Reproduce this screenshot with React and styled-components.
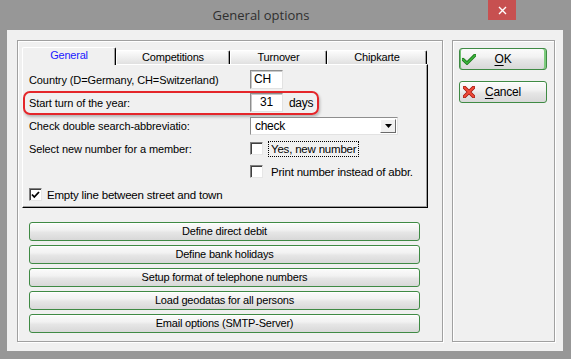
import React from 'react';
import styled, { createGlobalStyle } from 'styled-components';

const Global = createGlobalStyle`
  html, body { margin: 0; padding: 0; background: #979797; }
  body {
    width: 571px; height: 359px; overflow: hidden;
    font-family: "Liberation Sans", Arial, sans-serif;
  }
  * { box-sizing: border-box; }
`;

const Window = styled.div`
  width: 571px;
  height: 359px;
  background: #979797;
  display: flex;
  flex-direction: column;
`;

const TitleBar = styled.div`
  height: 30px;
  display: flex;
  padding-right: 55px;
`;

const Title = styled.div`
  flex: 1;
  padding-left: 34px;
  text-align: center;
  font-family: "Open Sans", "Noto Sans", sans-serif;
  font-size: 13px;
  line-height: 30px;
  color: #2f2f2f;
`;

const CloseButton = styled.div`
  width: 28px;
  height: 20px;
  background: #c75050;
  display: flex;
  align-items: center;
  justify-content: center;
`;

const Client = styled.div`
  flex: 1;
  margin: 0 8px 8px 7px;
  background: #f0f0f0;
  display: flex;
  gap: 9px;
  padding: 10px 8px 9px 10px;
`;

const GroupBox = styled.div`
  width: ${p => p.$w}px;
  height: 302px;
  border: 1px solid #a0a0a0;
  box-shadow: inset 1px 1px 0 #fff, 1px 1px 0 #fff;
  padding: ${p => p.$pad};
  display: flex;
  flex-direction: column;
`;

const TabRow = styled.div`
  display: flex;
  height: 17px;
  align-items: flex-start;
  position: relative;
  z-index: 1;
`;

const Tab = styled.div`
  width: ${p => p.$w}px;
  height: ${p => (p.$active ? 18 : 14)}px;
  margin-top: ${p => (p.$active ? 0 : 3)}px;
  border-top: 1px solid #fff;
  border-left: 1px solid #fff;
  border-right: 1px solid #000;
  box-shadow: inset -1px 0 0 #a0a0a0;
  background: ${p => (p.$active ? '#f0f0f0' : 'linear-gradient(#fcfcfc, #ececec 60%, #e0e0e0)')};
  color: ${p => (p.$active ? '#1a1aff' : '#000')};
  font-size: 11px;
  letter-spacing: -0.2px;
  text-align: center;
  line-height: ${p => (p.$active ? 15 : 13)}px;
  border-radius: 2px 2px 0 0;
`;

const TabPanel = styled.div`
  width: 406px;
  height: 144px;
  border-top: 1px solid #fff;
  border-left: 1px solid #fff;
  border-right: 1px solid #000;
  border-bottom: 1px solid #000;
  box-shadow: inset -1px -1px 0 #a0a0a0;
  padding: 3px 0 0 6px;
  display: flex;
  flex-direction: column;
`;

const Row = styled.div`
  height: 23px;
  display: flex;
  align-items: center;
  position: relative;
  font-size: 11px;
  letter-spacing: -0.1px;
  color: #000;
`;

const Label = styled.div`
  width: ${p => p.$w || 221}px;
  white-space: nowrap;
`;

const Highlight = styled.div`
  position: absolute;
  left: -6px;
  top: 0;
  width: 296px;
  height: 24px;
  border: 2px solid #e4262a;
  border-radius: 7px;
  box-shadow: 1px 2px 3px rgba(0, 0, 0, 0.25);
  pointer-events: none;
`;

const TextBox = styled.div`
  width: 33px;
  height: 19px;
  background: #fff;
  border: 1px solid;
  border-color: #8e8e8e #e2e2e2 #e2e2e2 #8e8e8e;
  box-shadow: inset 1px 1px 0 #c8c8c8;
  padding: 0 3px;
  font-size: 12px;
  letter-spacing: -0.2px;
  line-height: 17px;
  text-align: ${p => p.$align || 'left'};
`;

const Unit = styled.span`
  margin-left: 6px;
  font-size: 12px;
  letter-spacing: -0.3px;
`;

const Select = styled.div`
  width: 148px;
  height: 18px;
  background: #fff;
  border: 1px solid;
  border-color: #8e8e8e #e2e2e2 #e2e2e2 #8e8e8e;
  display: flex;
  align-items: stretch;
  padding: 1px;
`;

const SelectText = styled.div`
  flex: 1;
  padding-left: 3px;
  font-size: 12px;
  letter-spacing: -0.3px;
  line-height: 14px;
`;

const DropButton = styled.div`
  width: 16px;
  background: #f0f0f0;
  border: 1px solid;
  border-color: #fff #6a6a6a #6a6a6a #fff;
  display: flex;
  align-items: center;
  justify-content: center;
`;

const CheckBox = styled.div`
  width: 13px;
  height: 13px;
  background: #fff;
  border: 1px solid;
  border-color: #808080 #e6e6e6 #e6e6e6 #808080;
  box-shadow: inset 1px 1px 0 #404040;
  display: flex;
  align-items: center;
  justify-content: center;
  flex-shrink: 0;
`;

const CheckLabel = styled.div`
  margin-left: ${p => p.$ml || 5}px;
  padding: 1px 2px;
  border: 1px ${p => (p.$focus ? 'dotted #000' : 'solid transparent')};
  font-size: 11.5px;
  letter-spacing: -0.2px;
  white-space: nowrap;
`;

const ActionStack = styled.div`
  margin: 14px 0 0 7px;
  display: flex;
  flex-direction: column;
  gap: 4px;
`;

const GreenButton = styled.div`
  width: ${p => p.$w}px;
  height: ${p => p.$h}px;
  border: 1px solid #3f8a44;
  border-radius: 3px;
  background: linear-gradient(#fbfbfb 0%, #f2f2f2 40%, #e6e6e6 55%, #d8d8d8 100%);
  box-shadow: ${p => (p.$default ? 'inset 1px 0 0 #6fc06f, inset -2px 0 0 #7ccb7c' : 'inset 0 1px 0 #fff')};
  display: grid;
  align-items: center;
  font-size: ${p => p.$fs || 11}px;
  letter-spacing: -0.2px;
  color: #000;
  & > * { grid-area: 1 / 1; }
`;

const ButtonText = styled.span`
  justify-self: center;
  line-height: 1;
  u { text-decoration: underline; text-underline-offset: 2px; }
`;

const Glyph = styled.span`
  justify-self: start;
  margin-left: ${p => p.$ml}px;
  display: flex;
`;

const SideStack = styled.div`
  display: flex;
  flex-direction: column;
  gap: 11px;
`;

const Tick = () => (
  <svg width="9" height="8" viewBox="0 0 9 8">
    <path d="M1 3.5 L3.3 6 L8 1" fill="none" stroke="#000" strokeWidth="1.8" />
  </svg>
);

const Arrow = () => (
  <svg width="7" height="4" viewBox="0 0 7 4">
    <path d="M0 0 H7 L3.5 4 Z" fill="#000" />
  </svg>
);

const OkIcon = () => (
  <svg width="14" height="11" viewBox="0 0 14 11">
    <path d="M1 5.5 L5 9.2 L13 1.2" fill="none" stroke="#1c7a1c" strokeWidth="3.2" strokeLinecap="round" />
    <path d="M1 5.5 L5 9.2 L13 1.2" fill="none" stroke="#3cb43c" strokeWidth="1.6" strokeLinecap="round" />
  </svg>
);

const CancelIcon = () => (
  <svg width="12" height="12" viewBox="0 0 12 12">
    <path d="M1.5 1.5 L10.5 10.5 M10.5 1.5 L1.5 10.5" stroke="#a01810" strokeWidth="3.6" strokeLinecap="round" />
    <path d="M1.5 1.5 L10.5 10.5 M10.5 1.5 L1.5 10.5" stroke="#f04a38" strokeWidth="2" strokeLinecap="round" />
  </svg>
);

const actions = [
  'Define direct debit',
  'Define bank holidays',
  'Setup format of telephone numbers',
  'Load geodatas for all persons',
  'Email options (SMTP-Server)',
];

const tabs = [
  { name: 'General', w: 94, active: true },
  { name: 'Competitions', w: 114 },
  { name: 'Turnover', w: 97 },
  { name: 'Chipkarte', w: 100 },
];

export default function App() {
  return (
    <>
      <Global />
      <Window>
        <TitleBar>
          <Title>General options</Title>
          <CloseButton>
            <svg width="9" height="9" viewBox="0 0 9 9">
              <path d="M1 1 L8 8 M8 1 L1 8" stroke="#fff" strokeWidth="1.4" />
            </svg>
          </CloseButton>
        </TitleBar>
        <Client>
          <GroupBox $w={426} $pad="6px 0 0 4px">
            <TabRow>
              {tabs.map(t => (
                <Tab key={t.name} $w={t.w} $active={t.active}>{t.name}</Tab>
              ))}
            </TabRow>
            <TabPanel>
              <Row>
                <Label>Country (D=Germany, CH=Switzerland)</Label>
                <TextBox>CH</TextBox>
              </Row>
              <Row>
                <Highlight />
                <Label>Start turn of the year:</Label>
                <TextBox $align="center">31</TextBox>
                <Unit>days</Unit>
              </Row>
              <Row>
                <Label>Check double search-abbreviatio:</Label>
                <Select>
                  <SelectText>check</SelectText>
                  <DropButton><Arrow /></DropButton>
                </Select>
              </Row>
              <Row>
                <Label>Select new number for a member:</Label>
                <CheckBox />
                <CheckLabel $focus>Yes, new number</CheckLabel>
              </Row>
              <Row>
                <Label />
                <CheckBox />
                <CheckLabel>Print number instead of abbr.</CheckLabel>
              </Row>
              <Row>
                <CheckBox><Tick /></CheckBox>
                <CheckLabel $ml={2}>Empty line between street and town</CheckLabel>
              </Row>
            </TabPanel>
            <ActionStack>
              {actions.map(a => (
                <GreenButton key={a} $w={391} $h={19}>
                  <ButtonText>{a}</ButtonText>
                </GreenButton>
              ))}
            </ActionStack>
          </GroupBox>
          <GroupBox $w={103} $pad="7px 0 0 6px">
            <SideStack>
              <GreenButton $w={88} $h={22} $fs={12} $default>
                <Glyph $ml={2}><OkIcon /></Glyph>
                <ButtonText><u>O</u>K</ButtonText>
              </GreenButton>
              <GreenButton $w={88} $h={22} $fs={12}>
                <Glyph $ml={3}><CancelIcon /></Glyph>
                <ButtonText><u>C</u>ancel</ButtonText>
              </GreenButton>
            </SideStack>
          </GroupBox>
        </Client>
      </Window>
    </>
  );
}
